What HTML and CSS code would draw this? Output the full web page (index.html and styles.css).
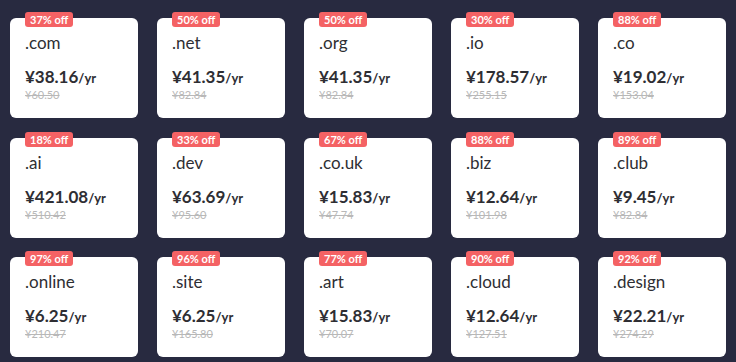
FILE: index.html
```html
<!DOCTYPE html>
<html lang="en">
<head>
<meta charset="utf-8">
<title>Domain deals</title>
<link rel="stylesheet" href="styles.css">
</head>
<body>
<div class="grid">
  <div class="card"><span class="badge">37% off</span><div class="tld">.com</div><div class="price">¥38.16<span class="per">/yr</span></div><div class="old">¥60.50</div></div>
  <div class="card"><span class="badge">50% off</span><div class="tld">.net</div><div class="price">¥41.35<span class="per">/yr</span></div><div class="old">¥82.84</div></div>
  <div class="card"><span class="badge">50% off</span><div class="tld">.org</div><div class="price">¥41.35<span class="per">/yr</span></div><div class="old">¥82.84</div></div>
  <div class="card"><span class="badge">30% off</span><div class="tld">.io</div><div class="price">¥178.57<span class="per">/yr</span></div><div class="old">¥255.15</div></div>
  <div class="card"><span class="badge">88% off</span><div class="tld">.co</div><div class="price">¥19.02<span class="per">/yr</span></div><div class="old">¥153.04</div></div>

  <div class="card"><span class="badge">18% off</span><div class="tld">.ai</div><div class="price">¥421.08<span class="per">/yr</span></div><div class="old">¥510.42</div></div>
  <div class="card"><span class="badge">33% off</span><div class="tld">.dev</div><div class="price">¥63.69<span class="per">/yr</span></div><div class="old">¥95.60</div></div>
  <div class="card"><span class="badge">67% off</span><div class="tld">.co.uk</div><div class="price">¥15.83<span class="per">/yr</span></div><div class="old">¥47.74</div></div>
  <div class="card"><span class="badge">88% off</span><div class="tld">.biz</div><div class="price">¥12.64<span class="per">/yr</span></div><div class="old">¥101.98</div></div>
  <div class="card"><span class="badge">89% off</span><div class="tld">.club</div><div class="price">¥9.45<span class="per">/yr</span></div><div class="old">¥82.84</div></div>

  <div class="card"><span class="badge">97% off</span><div class="tld">.online</div><div class="price">¥6.25<span class="per">/yr</span></div><div class="old">¥210.47</div></div>
  <div class="card"><span class="badge">96% off</span><div class="tld">.site</div><div class="price">¥6.25<span class="per">/yr</span></div><div class="old">¥165.80</div></div>
  <div class="card"><span class="badge">77% off</span><div class="tld">.art</div><div class="price">¥15.83<span class="per">/yr</span></div><div class="old">¥70.07</div></div>
  <div class="card"><span class="badge">90% off</span><div class="tld">.cloud</div><div class="price">¥12.64<span class="per">/yr</span></div><div class="old">¥127.51</div></div>
  <div class="card"><span class="badge">92% off</span><div class="tld">.design</div><div class="price">¥22.21<span class="per">/yr</span></div><div class="old">¥274.29</div></div>
</div>
</body>
</html>
```

FILE: styles.css
```css
html, body {
  margin: 0;
  padding: 0;
  background: #282a40;
  font-family: Lato, "Noto Sans", sans-serif;
  color: #333;
}

.grid {
  display: grid;
  grid-template-columns: repeat(5, 128px);
  grid-auto-rows: 100px;
  column-gap: 19px;
  row-gap: 19.5px;
  padding: 18px 10px 0 10px;
}

.card {
  position: relative;
  background: #fff;
  border-radius: 6px;
  padding: 15px 15px 0 15px;
  box-sizing: border-box;
}

.badge {
  position: absolute;
  top: -6px;
  left: 15px;
  height: 15px;
  line-height: 15px;
  padding: 0 5px;
  background: #f46264;
  color: #fff;
  font-size: 11px;
  font-weight: 700;
  border-radius: 3px;
}

.tld {
  font-size: 17px;
  line-height: 20px;
  color: #2e2e33;
}

.price {
  margin-top: 14px;
  font-size: 17px;
  line-height: 20px;
  font-weight: 700;
  color: #2e2e33;
}

.per {
  font-size: 13px;
}

.old {
  font-size: 11px;
  line-height: 14px;
  color: #b8b8b8;
  text-decoration: line-through;
}
```
